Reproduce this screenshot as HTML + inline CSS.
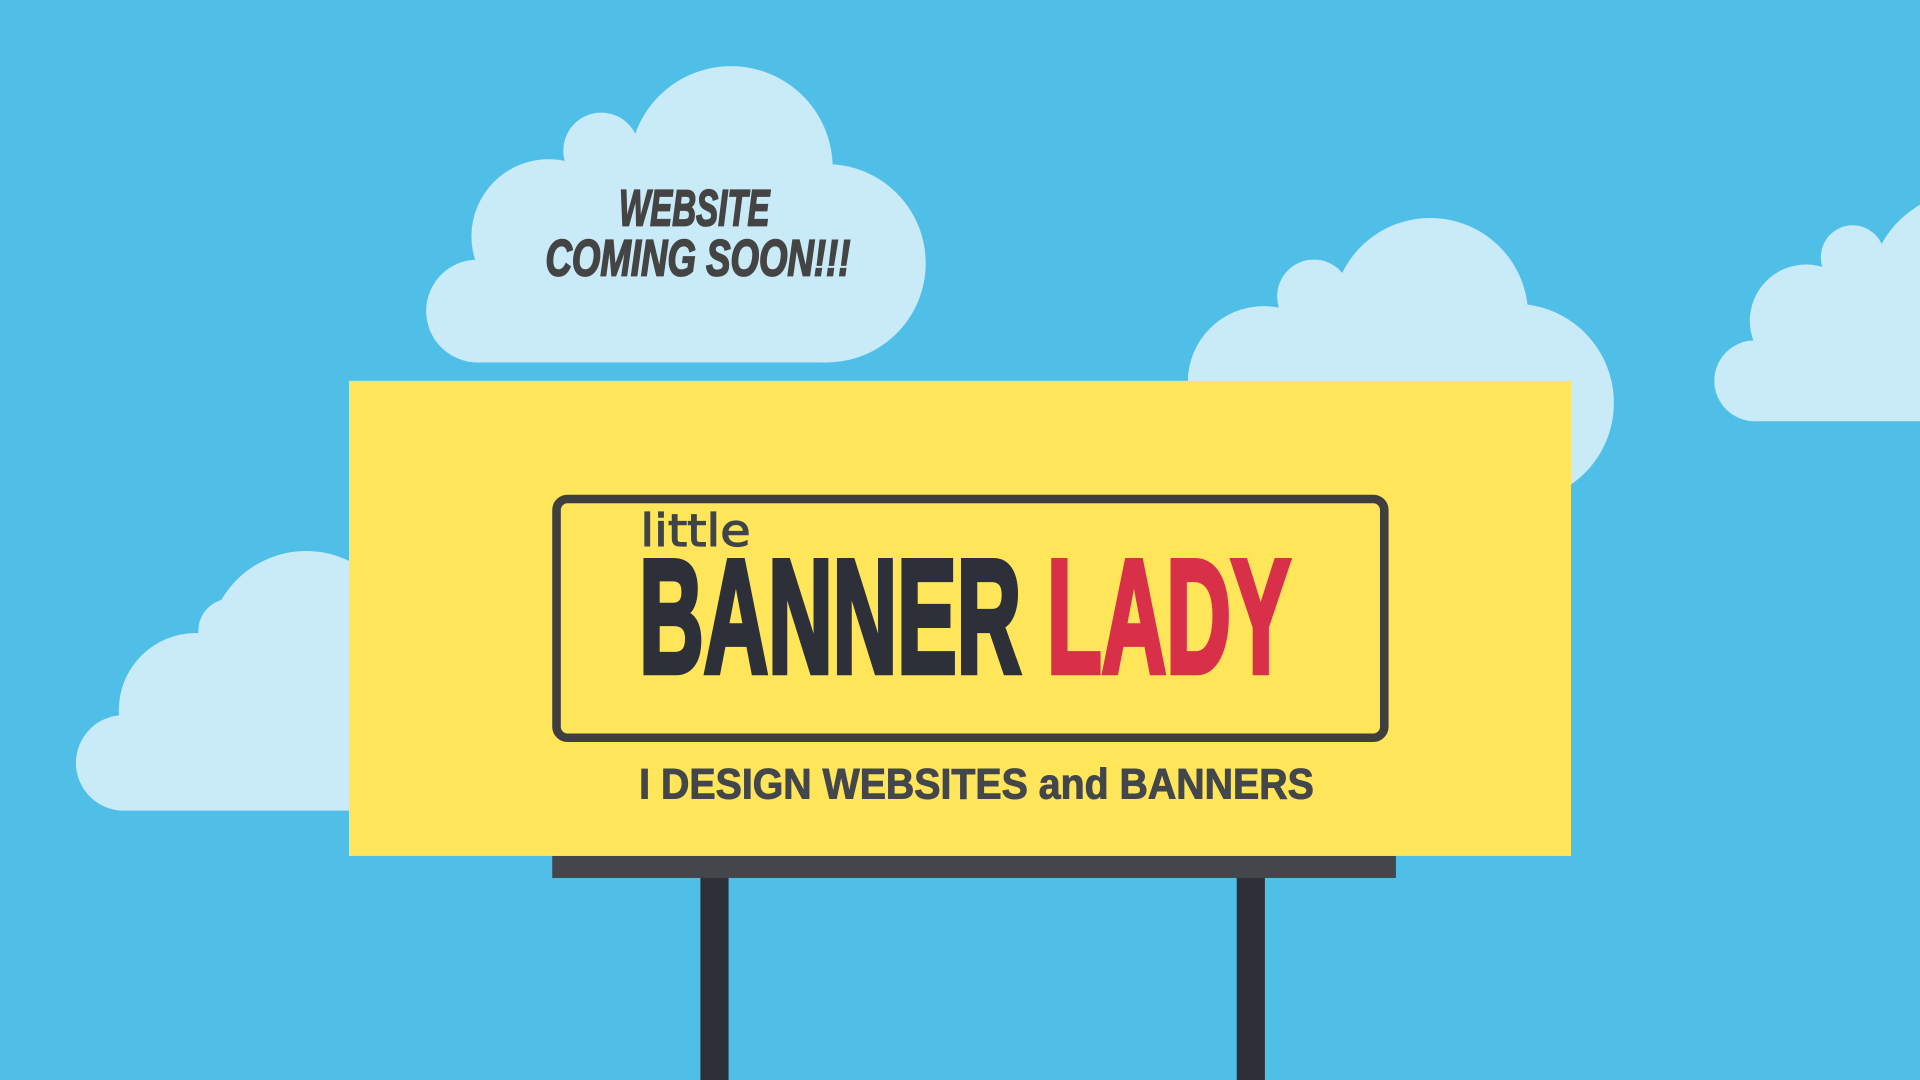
<!DOCTYPE html>
<html><head><meta charset="utf-8"><style>
html,body{margin:0;padding:0;width:1920px;height:1080px;overflow:hidden;background:#4fbfe7}
svg{display:block}
</style></head><body>
<svg width="1920" height="1080" viewBox="0 0 1568 882" xmlns="http://www.w3.org/2000/svg">
<rect width="1568" height="882" fill="#4fbfe7"/>
<g fill="#c9eaf7">
  <!-- cloud 1 -->
  <circle cx="675" cy="215" r="81"/>
  <circle cx="597" cy="137" r="83"/>
  <circle cx="491" cy="123" r="31"/>
  <circle cx="448" cy="193" r="63"/>
  <circle cx="390" cy="254" r="42"/>
  <rect x="390" y="190" width="285" height="106"/>
  <rect x="462" y="124" width="200" height="100"/>
  <!-- cloud 2 -->
  <circle cx="1168" cy="258" r="80"/>
  <circle cx="1073" cy="242" r="30"/>
  <circle cx="1032" cy="312" r="62"/>
  <circle cx="1237" cy="329" r="81"/>
  <rect x="1000" y="280" width="237" height="130"/>
  <rect x="1044" y="242" width="200" height="90"/>
  <!-- cloud 3 -->
  <circle cx="1513" cy="210" r="26"/>
  <circle cx="1475" cy="262" r="46"/>
  <circle cx="1433" cy="311" r="33"/>
  <circle cx="1610" cy="240" r="84"/>
  <rect x="1433" y="250" width="140" height="94"/>
  <rect x="1488" y="210" width="90" height="80"/>
  <!-- cloud 4 -->
  <circle cx="250" cy="530" r="80"/>
  <circle cx="188" cy="515" r="26"/>
  <circle cx="160" cy="580" r="63"/>
  <circle cx="101" cy="623" r="39"/>
  <rect x="101" y="560" width="200" height="102"/>
  <rect x="162" y="515" width="120" height="80"/>
</g>
<g font-family="Liberation Sans Narrow, Liberation Sans, sans-serif" font-weight="bold" font-style="italic" fill="#444" stroke="#444" stroke-width="1.5">
<text x="567" y="184" text-anchor="middle" font-size="42" textLength="123" lengthAdjust="spacingAndGlyphs">WEBSITE</text>
<text x="570" y="225" text-anchor="middle" font-size="42" textLength="249" lengthAdjust="spacingAndGlyphs">COMING SOON!!!</text>
</g>
<!-- legs -->
<rect x="572" y="712" width="23" height="170" fill="#2d3038"/>
<rect x="1010" y="712" width="23" height="170" fill="#2d3038"/>
<rect x="451" y="699" width="689" height="18" fill="#43464b"/>
<!-- board -->
<rect x="285" y="311" width="998" height="388" fill="#ffe55a"/>
<rect x="454.5" y="407.5" width="676" height="195" rx="9" fill="none" stroke="#3f3f3f" stroke-width="7"/>
<text x="523" y="446" font-family="DejaVu Sans, sans-serif" font-size="36" fill="#3f444a" stroke="#3f444a" stroke-width="1" textLength="90" lengthAdjust="spacingAndGlyphs">little</text>
<text x="522" y="549" font-family="Liberation Sans Narrow, Liberation Sans, sans-serif" font-weight="bold" font-size="132" fill="#2d3038" stroke="#2d3038" stroke-width="5" textLength="312" lengthAdjust="spacingAndGlyphs">BANNER</text>
<text x="855" y="549" font-family="Liberation Sans Narrow, Liberation Sans, sans-serif" font-weight="bold" font-size="132" fill="#d9304a" stroke="#d9304a" stroke-width="5" textLength="199" lengthAdjust="spacingAndGlyphs">LADY</text>
<text x="522" y="652" font-family="Liberation Sans Narrow, Liberation Sans, sans-serif" font-weight="bold" font-size="35" fill="#43464b" stroke="#43464b" stroke-width="0.8" textLength="551" lengthAdjust="spacingAndGlyphs">I DESIGN WEBSITES and BANNERS</text>
</svg>
</body></html>
